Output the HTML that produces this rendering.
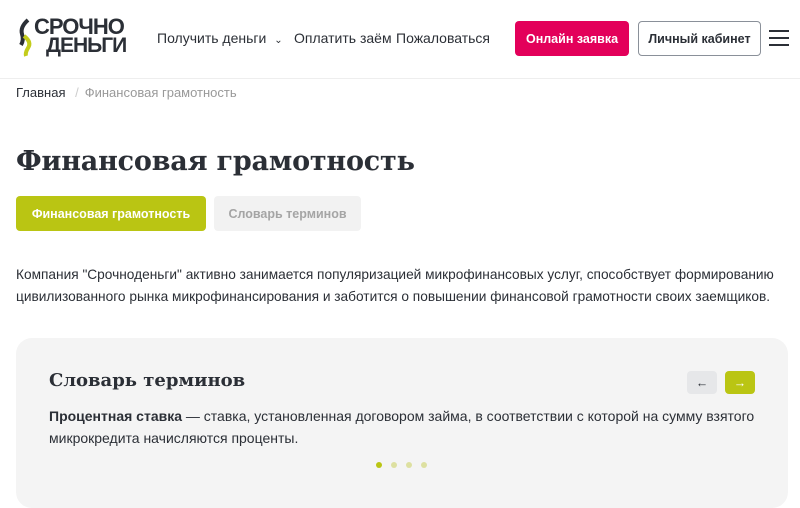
<!DOCTYPE html>
<html><head><meta charset="utf-8"><style>
*{margin:0;padding:0;box-sizing:border-box}
body{width:800px;height:490px;overflow:hidden;background:#fff;font-family:"Liberation Sans",sans-serif;color:#2b2f36;position:relative}
.a{position:absolute;white-space:nowrap}
.nav{font-size:14px;color:#2b2f36;top:30px}
.btn{position:absolute;border-radius:4px;font-size:12.5px;font-weight:bold;display:flex;align-items:center;justify-content:center}
</style></head><body>
<svg class="a" style="left:16px;top:18px" width="30" height="40" viewBox="0 0 30 40">
<path d="M12 2 Q4 9 6 16 Q8 22 5 27" stroke="#2b2f36" stroke-width="4" fill="none"/>
<path d="M8 18 Q16 24 12 30 Q9 35 10 38" stroke="#c3cc1b" stroke-width="4" fill="none"/>
</svg>
<div class="a" style="left:34px;top:17px;font-size:22px;font-weight:900;color:#2b2f36;letter-spacing:-1px;line-height:19px">СРОЧНО</div>
<div class="a" style="left:46px;top:36px;font-size:21px;font-weight:900;color:#2b2f36;letter-spacing:-1px;line-height:19px">ДЕНЬГИ</div>
<div class="a nav" style="left:157px">Получить деньги <span style="font-size:10px;margin-left:4px">&#8964;</span></div>
<div class="a nav" style="left:294px">Оплатить заём</div>
<div class="a nav" style="left:396px">Пожаловаться</div>
<div class="btn" style="left:515px;top:21px;width:114px;height:35px;background:#e3005a;color:#fff">Онлайн заявка</div>
<div class="btn" style="left:638px;top:21px;width:123px;height:35px;border:1px solid #8a9099;color:#2b2f36">Личный кабинет</div>
<div class="a" style="left:769px;top:30px;width:20px;height:2px;background:#2b2f36;box-shadow:0 7px 0 #2b2f36,0 14px 0 #2b2f36"></div>
<div class="a" style="left:0;top:78px;width:800px;height:1px;background:#eee"></div>
<div class="a" style="left:16px;top:85px;font-size:13px;color:#2b2f36">Главная <span style="color:#ccc;margin:0 6px">/</span><span style="color:#999">Финансовая грамотность</span></div>
<div class="a" style="left:16px;top:146px;font-family:'DejaVu Serif',serif;font-weight:bold;font-size:27px;color:#2b2f36;letter-spacing:-0.2px">Финансовая грамотность</div>
<div class="btn" style="left:16px;top:196px;width:190px;height:35px;background:#bac513;color:#fff">Финансовая грамотность</div>
<div class="btn" style="left:214px;top:196px;width:147px;height:35px;background:#f2f2f2;color:#a5a5a5">Словарь терминов</div>
<div class="a" style="left:16px;top:264px;font-size:13.7px;line-height:22px;color:#2b2f36">Компания "Срочноденьги" активно занимается популяризацией микрофинансовых услуг, способствует формированию<br>цивилизованного рынка микрофинансирования и заботится о повышении финансовой грамотности своих заемщиков.</div>
<div class="a" style="left:16px;top:338px;width:772px;height:170px;background:#f4f4f4;border-radius:16px"></div>
<div class="a" style="left:49px;top:370px;font-family:'DejaVu Serif',serif;font-weight:bold;font-size:18px;color:#2b2f36">Словарь терминов</div>
<div class="btn" style="left:687px;top:371px;width:30px;height:23px;background:#e6e7e9;color:#2b2f36;font-weight:normal">&#8592;</div>
<div class="btn" style="left:725px;top:371px;width:30px;height:23px;background:#bac513;color:#fff;font-weight:normal">&#8594;</div>
<div class="a" style="left:49px;top:405px;font-size:14px;line-height:22px;color:#2b2f36"><b>Процентная ставка</b> — ставка, установленная договором займа, в соответствии с которой на сумму взятого<br>микрокредита начисляются проценты.</div>
<div class="a" style="left:376px;top:462px;width:6px;height:6px;border-radius:50%;background:#bac513;box-shadow:15px 0 0 #dde0a0,30px 0 0 #dde0a0,45px 0 0 #dde0a0"></div>
</body></html>
